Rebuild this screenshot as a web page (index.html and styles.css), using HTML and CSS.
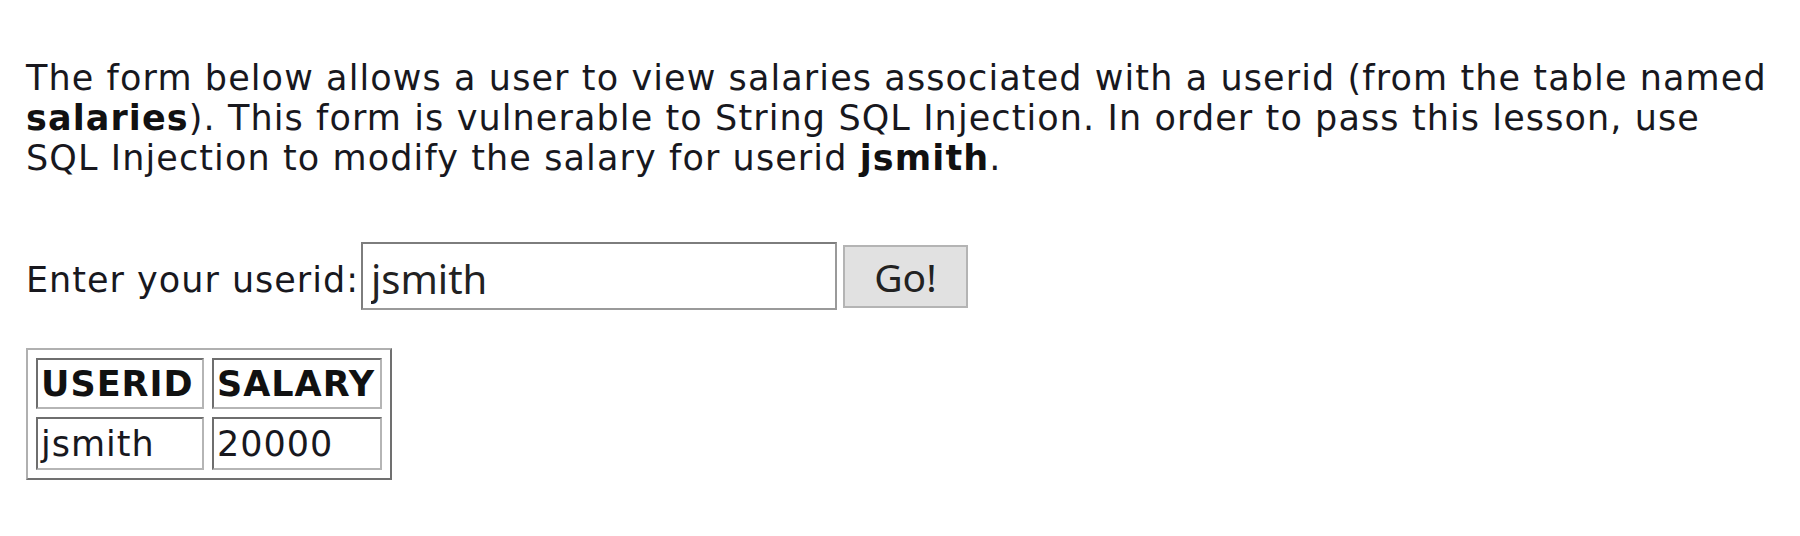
FILE: index.html
```
<!DOCTYPE html>
<html>
<head>
<meta charset="utf-8">
<link rel="stylesheet" href="styles.css">
</head>
<body>
<div class="lesson">
  <p class="intro">The form below allows a user to view salaries associated with a userid (from the table named<br><b>salaries</b>). This form is vulnerable to String SQL Injection. In order to pass this lesson, use<br>SQL Injection to modify the salary for userid <b>jsmith</b>.</p>
  <form class="lookup">
    <label class="lookup-label" for="userid">Enter your userid:</label>
    <input class="lookup-input" id="userid" type="text" value="jsmith">
    <button class="lookup-btn" type="button">Go!</button>
  </form>
  <table class="results">
    <tr><th class="col-user">USERID</th><th class="col-salary">SALARY</th></tr>
    <tr><td class="col-user">jsmith</td><td class="col-salary">20000</td></tr>
  </table>
</div>
</body>
</html>
```
FILE: styles.css
```
html, body {
  margin: 0;
  padding: 0;
  background: #ffffff;
}
body {
  font-family: "DejaVu Sans", Verdana, sans-serif;
  font-size: 35px;
  line-height: 40px;
  letter-spacing: 1px;
  color: #18181e;
}
.lesson {
  padding: 58px 0 0 26px;
}
.intro {
  margin: 0;
  white-space: nowrap;
  letter-spacing: 1.1px;
}
.intro b {
  font-weight: bold;
  color: #111;
}
.lookup {
  margin-top: 64px;
  display: flex;
  align-items: center;
  height: 68px;
}
.lookup-label {
  padding-top: 8px;
  margin-right: 2px;
}
.lookup-input {
  box-sizing: border-box;
  width: 476px;
  height: 68px;
  border: 2px solid #7d7d7d;
  border-right-color: #9a9a9a;
  border-bottom-color: #9a9a9a;
  padding: 4px 8px 0 8px;
  font-family: "Noto Sans", "Open Sans", sans-serif;
  font-size: 40px;
  letter-spacing: 0;
  color: #222;
  background: #fff;
  outline: none;
  margin: 0;
}
.lookup-btn {
  box-sizing: border-box;
  margin-left: 6px;
  width: 125px;
  height: 63px;
  background: #e1e1e1;
  border: 2px solid #b4b4b4;
  font-family: "Noto Sans", "Open Sans", sans-serif;
  font-size: 39px;
  letter-spacing: 0;
  color: #222;
  padding: 0;
}
.results {
  margin-top: 38px;
  border: 2px solid;
  border-color: #b0b0b0 #707070 #707070 #b0b0b0;
  border-spacing: 8px;
}
.results th,
.results td {
  border: 2px solid;
  border-color: #6e6e6e #b5b5b5 #b5b5b5 #6e6e6e;
  padding: 0 3px;
  text-align: left;
  box-sizing: border-box;
}
.results th {
  font-weight: bold;
  color: #111;
  height: 51px;
}
.results td {
  height: 53px;
}
.col-user {
  width: 168px;
}
.col-salary {
  width: 170px;
}
```
